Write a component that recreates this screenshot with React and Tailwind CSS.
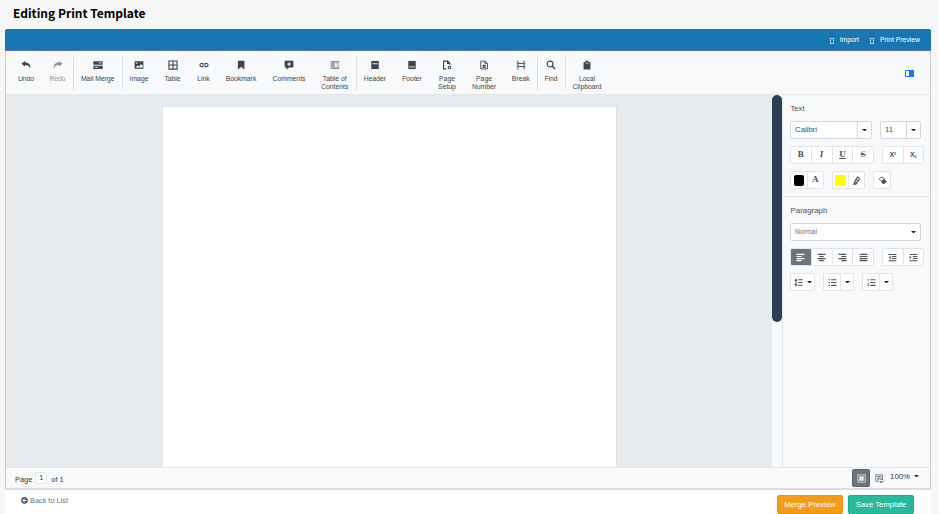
import React from "react";
import { FaArrowCircleLeft } from "react-icons/fa";

const Icon = ({ children, className = "w-[10px] h-[10px]", sw = 1.8 }) => (
  <svg viewBox="0 0 16 16" className={className} fill="none" stroke="currentColor" strokeWidth={sw}>
    {children}
  </svg>
);

const Caret = () => (
  <svg viewBox="0 0 8 4" className="w-[5px] h-[2.5px] shrink-0" fill="#212529">
    <path d="M0 0h8L4 4z" />
  </svg>
);

const UndoShape = () => (
  <path d="M6.500 1.500.500 6 6.500 10.500V8c4 0 6.500 1 8 6C16 8 12.500 4 6.500 4z" fill="currentColor" stroke="none" />
);

const toolbar = [
  { label: "Undo", width: "w-[32px]", icon: <UndoShape /> },
  {
    label: "Redo",
    width: "w-[32px]",
    disabled: true,
    end: true,
    icon: (
      <g transform="translate(16 0) scale(-1 1)">
        <UndoShape />
      </g>
    ),
  },
  {
    label: "Mail Merge",
    width: "w-[48.5px]",
    end: true,
    icon: (
      <>
        <path d="M.500 2h15v5.500H.500zM.500 9h15v5.500H.500z" fill="currentColor" stroke="none" />
        <path d="M9 4.700h5M2.500 11.700h6" stroke="#f8f9fa" strokeWidth="1.200" />
      </>
    ),
  },
  {
    label: "Image",
    width: "w-[33px]",
    icon: (
      <>
        <path d="M1 2h14v12H1z" fill="currentColor" stroke="none" />
        <path d="m2.500 12 3.500-3.500 2 2 3.500-4 2.500 3V12z" fill="#f8f9fa" stroke="none" />
        <path d="M3 4h3v2H3z" fill="#c8cdd2" stroke="none" />
      </>
    ),
  },
  { label: "Table", width: "w-[34px]", icon: <path d="M1.500 1.500h13v13h-13zM8 1.500v13M1.500 8h13" /> },
  {
    label: "Link",
    width: "w-[28px]",
    icon: <path d="M7 10.500H4a2.500 2.500 0 0 1 0-5h3M9 5.500h3a2.500 2.500 0 0 1 0 5H9M5 8h6" />,
  },
  {
    label: "Bookmark",
    width: "w-[47px]",
    icon: <path d="M3 1h10.500v14L8.200 11 3 15z" fill="currentColor" stroke="none" />,
  },
  {
    label: "Comments",
    width: "w-[49px]",
    icon: (
      <>
        <path d="M1 1h14v11H8l-4 3.500V12H1z" fill="currentColor" stroke="none" />
        <path d="M8 3.500v6M5 6.500h6" stroke="#f8f9fa" strokeWidth="1.700" />
      </>
    ),
  },
  {
    label: "Table of Contents",
    width: "w-[43.5px]",
    end: true,
    icon: <path d="M1 3h14M1 6.300h7M11 6.300h2M1 9.600h7M12 9.600h2M1 13h14" strokeWidth="1.500" />,
  },
  {
    label: "Header",
    width: "w-[36px]",
    icon: (
      <>
        <path d="M2 1.500h12v13H2z" fill="currentColor" stroke="none" />
        <path d="M3.500 6h9" stroke="#f8f9fa" strokeWidth="1.400" />
      </>
    ),
  },
  {
    label: "Footer",
    width: "w-[38px]",
    icon: (
      <>
        <path d="M2 1.500h12v13H2z" fill="currentColor" stroke="none" />
        <path d="M3.500 11h9" stroke="#f8f9fa" strokeWidth="1.400" />
      </>
    ),
  },
  {
    label: "Page Setup",
    width: "w-[32px]",
    icon: (
      <>
        <path d="M7 14.200H2.500V1.800H9l3.500 3.500V8M9 2v3.500h3.500" />
        <circle cx="12" cy="12" r="2" />
      </>
    ),
  },
  {
    label: "Page Number",
    width: "w-[42px]",
    icon: <path d="M2.800 1.800H10l3.500 3.500v9H2.800zM9.500 2v3.500h3.500M5.500 9h5.500M5.500 11.700h5.500M7 7.500v5M9.500 7.500v5" strokeWidth="1.400" />,
  },
  {
    label: "Break",
    width: "w-[32.5px]",
    end: true,
    icon: <path d="M3 1v4.500h10V1M3 15v-4.500h10V15M1 5.500 4 8l-3 2.500M15 5.500 12 8l3 2.500" strokeWidth="1.500" />,
  },
  {
    label: "Find",
    width: "w-[28px]",
    end: true,
    icon: (
      <>
        <circle cx="6.500" cy="6.500" r="4.700" />
        <path d="m10 10 4.500 4.500" strokeWidth="2.400" />
      </>
    ),
  },
  {
    label: "Local Clipboard",
    width: "w-[43px]",
    icon: (
      <>
        <path d="M2.500 3h11v12h-11zM5.500 1h5v3h-5z" fill="currentColor" stroke="none" />
        <path d="M5 5h6" stroke="#f8f9fa" strokeWidth="1" />
      </>
    ),
  },
];

const ToolbarItem = ({ item }) => (
  <button
    className={`flex h-[34px] shrink-0 flex-col items-center pt-[4px] ${item.width} ${
      item.end ? "border-r border-[#dee2e6]" : ""
    } ${item.disabled ? "text-[#8f959b]" : "text-[#3d454d]"}`}
  >
    <Icon className="h-[10px] w-[10px] shrink-0">{item.icon}</Icon>
    <span
      className={`mt-[5px] text-[6.800px] leading-[8px] ${
        item.label === "Mail Merge" ? "whitespace-nowrap" : ""
      } ${item.label === "Page Number" ? "w-[30px]" : ""}`}
    >
      {item.label}
    </span>
  </button>
);

// Row of joined buttons
const Group = ({ children, className = "border-[#e1e5e9] divide-[#e1e5e9]" }) => (
  <div className={`flex h-[18px] shrink-0 divide-x overflow-hidden rounded-[2px] border bg-white ${className}`}>
    {children}
  </div>
);

const Cell = ({ children, className = "flex-1", active }) => (
  <button
    className={`flex items-center justify-center ${className} ${
      active ? "bg-[#6c757d] text-white" : "text-[#495057]"
    }`}
  >
    {children}
  </button>
);

const lines = {
  left: "M1 2.500h14M1 6.200h9M1 9.900h14M1 13.600h9",
  center: "M1 2.500h14M4 6.200h8M1 9.900h14M4 13.600h8",
  right: "M1 2.500h14M6 6.200h9M1 9.900h14M6 13.600h9",
  justify: "M1 2.500h14M1 6.200h14M1 9.900h14M1 13.600h14",
};

const Sidebar = () => (
  <aside className="w-[148px] shrink-0 border-l border-[#e4e8eb] bg-[#f8f9fb] text-[#495057]">
    <section className="h-[102px] border-b border-[#e4e8eb] pl-[7px] pt-[9px]">
      <h2 className="pl-[0.500px] text-[7.700px] leading-[10px]">Text</h2>
      <div className="mt-[7px] flex gap-[8px] text-[7.800px]">
        <Group className="w-[82px] border-[#d3d8dd] divide-[#d3d8dd]">
          <span className="flex flex-1 items-center pl-[4px]">Calibri</span>
          <Cell className="w-[13px]"><Caret /></Cell>
        </Group>
        <Group className="w-[41px] border-[#d3d8dd] divide-[#d3d8dd]">
          <span className="flex flex-1 items-center pl-[4px]">11</span>
          <Cell className="w-[13px]"><Caret /></Cell>
        </Group>
      </div>
      <div className="mt-[7px] flex gap-[8px] font-['Liberation_Serif',serif] text-[9px]">
        <Group className="w-[84px] border-[#e1e5e9] divide-[#e1e5e9]">
          <Cell><b>B</b></Cell>
          <Cell><b className="italic">I</b></Cell>
          <Cell><b className="underline">U</b></Cell>
          <Cell><span className="line-through">S</span></Cell>
        </Group>
        <Group className="w-[42px] border-[#e1e5e9] divide-[#e1e5e9] font-['Liberation_Sans',sans-serif] text-[7px] font-bold">
          <Cell><span>X<sup className="text-[3.500px]">2</sup></span></Cell>
          <Cell><span>X<sub className="text-[3.500px]">2</sub></span></Cell>
        </Group>
      </div>
      <div className="mt-[7px] flex gap-[8px] font-['Liberation_Serif',serif] text-[9px]">
        <Group className="w-[34px] border-[#e1e5e9] divide-[#e1e5e9]">
          <Cell><span className="h-[11px] w-[10px] rounded-[2px] bg-black" /></Cell>
          <Cell><b>A</b></Cell>
        </Group>
        <Group className="w-[33px] border-[#e1e5e9] divide-[#e1e5e9]">
          <Cell><span className="h-[11px] w-[11px] bg-[#ff0]" /></Cell>
          <Cell>
            <Icon className="w-[9px] h-[9px]" sw={2}>
              <path d="m5 9 5-7 3.500 2.500L9 12H5zM5 12l-2 2.500h4L9 12M7.500 7l3 2.500" />
            </Icon>
          </Cell>
        </Group>
        <Group className="w-[18px] border-[#e1e5e9]">
          <Cell>
            <Icon className="w-[9px] h-[9px]" sw={1.500}>
              <path d="M5 9 2 6l3-3.500h4l2 3" />
              <path d="m6 9 5-3.500L14.500 10 12 13H8z" fill="currentColor" />
            </Icon>
          </Cell>
        </Group>
      </div>
    </section>

    <section className="pl-[7px] pt-[9px]">
      <h2 className="pl-[0.500px] text-[7.900px] leading-[10px]">Paragraph</h2>
      <div className="mt-[7px] flex h-[18px] w-[131px] items-center justify-between rounded-[2px] border border-[#d3d8dd] bg-white pl-[4px] pr-[4px] text-[6.800px] text-[#6b7278]">
        Normal
        <Caret />
      </div>
      <div className="mt-[7px] flex gap-[8px]">
        <Group className="w-[84px] border-[#e1e5e9] divide-[#e1e5e9]">
          {Object.keys(lines).map((name) => (
            <Cell key={name} active={name === "left"}>
              <Icon className="w-[9px] h-[9px]" sw={2}><path d={lines[name]} /></Icon>
            </Cell>
          ))}
        </Group>
        <Group className="w-[42px] border-[#e1e5e9] divide-[#e1e5e9]">
          <Cell>
            <Icon className="w-[9px] h-[9px]">
              <path d="M1 2.500h14M7 6.200h8M7 9.900h8M1 13.600h14" />
              <path d="M5 5v6L1.500 8z" fill="currentColor" stroke="none" />
            </Icon>
          </Cell>
          <Cell>
            <Icon className="w-[9px] h-[9px]">
              <path d="M1 2.500h14M7 6.200h8M7 9.900h8M1 13.600h14" />
              <path d="M1 5v6L4.500 8z" fill="currentColor" stroke="none" />
            </Icon>
          </Cell>
        </Group>
      </div>
      <div className="mt-[7px] flex gap-[8px]">
        <Group className="w-[25px] border-[#e1e5e9]">
          <Cell className="flex-1 gap-[4px] pl-[1px]">
            <Icon className="w-[9px] h-[9px]">
              <path d="M7.500 3h8M7.500 8h8M7.500 13h8M3.500 3v10" />
              <path d="M.500 5 3.500 1l3 4zM.500 11l3 4 3-4z" fill="currentColor" stroke="none" />
            </Icon>
            <Caret />
          </Cell>
        </Group>
        <Group className="w-[31px] border-[#e1e5e9] divide-[#e1e5e9]">
          <Cell className="w-[17px]">
            <Icon className="w-[9px] h-[9px]" sw={2}>
              <path d="M1 3h2.500M5.500 3H15M1 8h2.500M5.500 8H15M1 13h2.500M5.500 13H15" />
            </Icon>
          </Cell>
          <Cell><Caret /></Cell>
        </Group>
        <Group className="w-[31px] border-[#e1e5e9] divide-[#e1e5e9]">
          <Cell className="w-[17px]">
            <Icon className="w-[9px] h-[9px]" sw={2}>
              <path d="M6 3h9M6 8h9M6 13h9" />
              <path d="M1 2h1.500v4M1 9.500h2.500L1 13.500h3" strokeWidth="1.200" />
            </Icon>
          </Cell>
          <Cell><Caret /></Cell>
        </Group>
      </div>
    </section>
  </aside>
);

const App = () => {
  return (
    <div className="h-[514px] w-[939px] overflow-hidden bg-[#f7f7f7] font-['Liberation_Sans',Arial,sans-serif]">
      <h1 className="h-[29px] pl-[13px] pt-[3px] font-['Noto_Sans_CJK_SC',sans-serif] text-[12px] font-bold leading-[20px] text-black">
        Editing Print Template
      </h1>

      <div className="ml-[5px] h-[485px] w-[926px] bg-white">
        {/* Editor */}
        <div className="flex h-[461px] flex-col rounded-t-[2px] border-x border-b-2 border-x-[#c9cdd0] border-b-[#dcdddf] bg-[#f8f9fb]">
          <header className="-mx-px flex h-[22px] shrink-0 items-center justify-end gap-[11px] rounded-t-[2px] border-b border-[#5a6ea5] bg-[#1777b2] pr-[11px] pt-[2px] text-[6.800px] text-white">
            <button className="flex items-center gap-[6px]">
              <span className="h-[6px] w-[4px] border border-white/60" />
              Import
            </button>
            <button className="flex items-center gap-[6px]">
              <span className="h-[6px] w-[4px] border border-white/60" />
              Print Preview
            </button>
          </header>

          <div className="flex h-[44px] shrink-0 items-center border-b border-[#e4e8eb] pl-[4px] pr-[16px]">
            {toolbar.map((item) => (
              <ToolbarItem key={item.label} item={item} />
            ))}
            <button className="ml-auto mt-px flex h-[7px] w-[9px] border border-[#0d7bff] bg-white">
              <span className="ml-auto h-full w-[4px] bg-[#0d7bff]" />
            </button>
          </div>

          <div className="flex min-h-0 flex-1">
            <div className="w-[766px] bg-[#e7ebee] pl-[156px] pt-[11px]">
              <div className="h-full w-[455px] border border-b-0 border-[#dfe3e7] bg-white" />
            </div>
            <div className="w-[10px] bg-[#f8f9fb]">
              <div className="h-[227px] w-[10px] rounded-full bg-[#2b3e54]" />
            </div>
            <Sidebar />
          </div>

          <footer className="flex h-[21px] shrink-0 items-center border-t border-[#e4e8eb] pl-[9px] pr-[11px] text-[7.400px] text-[#343a40]">
            <span className="pt-[3px]">Page</span>
            <span className="ml-[3px] mr-[4px] flex h-[12px] w-[12px] items-center justify-center rounded-[1px] border border-[#e1e5e9] bg-white">
              1
            </span>
            <span className="pt-[3px]">of 1</span>
            <button className="ml-auto flex h-[18px] w-[18px] items-center justify-center rounded-[2px] border border-[#59626a] bg-[#6c757d] text-[#dfe3e6]">
              <Icon className="w-[9px] h-[9px]" sw={1.500}>
                <path d="M1.500 1.500h13v13h-13z" />
                <path d="M4 4h8v8H4z" fill="#e6e9eb" stroke="none" />
              </Icon>
            </button>
            <button className="ml-[5px] text-[#495057]">
              <Icon className="w-[9px] h-[9px]" sw={1.300}>
                <path d="M7 13H1.500V1.500h12V8M4 4.500h7M4 7.200h6M4 10h3" />
                <path d="M8 11a3 3 0 0 1 5-1.500M15 12a3 3 0 0 1-5 2M13.500 7.500v2.500H11M9.500 16v-2.500H12" />
              </Icon>
            </button>
            <span className="ml-[6px] mr-[4px] pb-[3px] text-[7.800px]">100%</span>
            <span className="pb-[4px]"><Caret /></span>
          </footer>
        </div>

        {/* Page actions */}
        <div className="flex h-[24px] justify-between pl-[16px] pr-[17px] pt-[5px]">
          <a className="flex h-[11px] items-center gap-[2px] text-[7.350px] text-[#66768a]">
            <FaArrowCircleLeft className="h-[7px] w-[7px] text-[#3b5570]" />
            Back to List
          </a>
          <div className="flex gap-[5px] text-[7.700px] text-white">
            <button className="h-[19px] w-[66px] rounded-[2px] border border-[#e59110] bg-[#f39c18]">Merge Preview</button>
            <button className="h-[19px] w-[66px] rounded-[2px] border border-[#1fae8c] bg-[#26b99a]">Save Template</button>
          </div>
        </div>
      </div>
    </div>
  );
};

export default App;
